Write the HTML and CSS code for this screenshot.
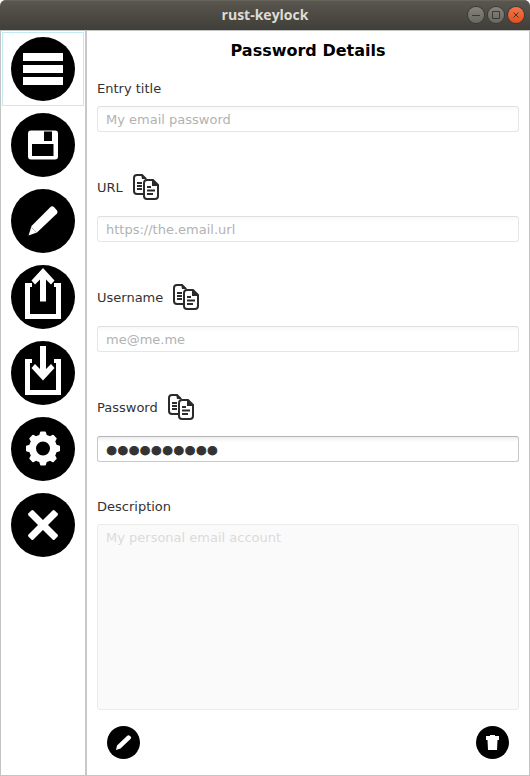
FILE: index.html
```html
<!DOCTYPE html>
<html lang="en">
<head>
<meta charset="utf-8">
<meta name="viewport" content="width=device-width, initial-scale=1">
<title>rust-keylock</title>
<link rel="stylesheet" href="styles.css">
</head>
<body>
<svg class="defs" aria-hidden="true">
  <symbol id="copy" viewBox="0 0 26 26">
    <path d="M10 20H4Q1 20 1 17V4Q1 1 4 1H9L13 5" fill="none" stroke="#2b2b2b" stroke-width="2"/>
    <path d="M8 0L14 5H9Z" fill="#2b2b2b"/>
    <path d="M4 9H9M4 12H9M4 15H9" stroke="#2b2b2b" stroke-width="2"/>
    <path d="M14 6H20L25 11V22Q25 25 22 25H14Q11 25 11 22V9Q11 6 14 6Z" fill="#fff" stroke="#2b2b2b" stroke-width="2"/>
    <path d="M19 5L26 12H19Z" fill="#2b2b2b"/>
    <path d="M14 13H18M14 16.500H22M14 20H20" stroke="#2b2b2b" stroke-width="2"/>
  </symbol>
</svg>
<header class="titlebar">
  <span class="titlebar-text">rust-keylock</span>
  <div class="window-controls">
    <button class="win" aria-label="Minimize"><svg viewBox="0 0 16 16"><path d="M4 8.5H12"/></svg></button>
    <button class="win" aria-label="Maximize"><svg viewBox="0 0 16 16"><path d="M4.500 4.500H11.500V11.500H4.500Z"/></svg></button>
    <button class="win win-close" aria-label="Close window"><svg viewBox="0 0 16 16"><path d="M5.500 5.500L10.500 10.500M10.500 5.500L5.500 10.500"/></svg></button>
  </div>
</header>
<div class="window">
  <nav class="sidebar">
    <button class="side focused" aria-label="Entries"><svg viewBox="0 0 64 64"><circle cx="32" cy="32" r="32"/><path class="w" d="M12 16H52V24H12ZM12 28H52V36H12ZM12 40H52V48H12Z"/></svg></button>
    <button class="side" aria-label="Save"><svg viewBox="0 0 64 64"><circle cx="32" cy="32" r="32"/><path class="w" fill-rule="evenodd" d="M20 17.500H44Q47 17.500 47 20.500V43.500Q47 46.500 44 46.500H20Q17 46.500 17 43.500V20.500Q17 17.500 20 17.500ZM33 18.500V28H41V18.500ZM21 31V43H42.500V31Z"/></svg></button>
    <button class="side" aria-label="Change master password"><svg viewBox="0 0 64 64"><circle cx="32" cy="32" r="32"/><path class="w" d="M39 18.500Q41 16.500 43 18L46 21.500Q47 23 46 24.500L26 43.500L17.500 46.500L20.500 37Z"/><path d="M20.500 38.500L25.500 43.500" fill="none" stroke="#000" stroke-width=".3"/></svg></button>
    <button class="side" aria-label="Export"><svg viewBox="0 0 64 64"><circle cx="32" cy="32" r="32"/><path class="w" d="M14 18H21V22H19V49H45V22H43V18H50V54H14ZM29 36.500V14.500L24 19.500L20.500 15.500L32 3L43.500 15.500L40 19.500L35 14.500V36.500Z"/></svg></button>
    <button class="side" aria-label="Import"><svg viewBox="0 0 64 64"><circle cx="32" cy="32" r="32"/><path class="w" d="M14 18H21V22H19V49H45V22H43V18H50V54H14ZM29 5V28L24 23L20.500 27L32 39.500L43.500 27L40 23L35 28V5Z"/></svg></button>
    <button class="side" aria-label="Settings"><svg viewBox="0 0 64 64"><circle cx="32" cy="32" r="32"/><circle cx="32" cy="31.500" r="10.500" fill="none" stroke="#fff" stroke-width="7"/><g class="w"><path id="t" d="M28 19L29 15.500Q29.200 14.500 30 14.500H34Q34.800 14.500 35 15.500L36 19ZM28 44L29 47.500Q29.200 48.500 30 48.500H34Q34.800 48.500 35 47.500L36 44Z"/><use href="#t" transform="rotate(45 32 31.500)"/><use href="#t" transform="rotate(90 32 31.500)"/><use href="#t" transform="rotate(135 32 31.500)"/></g></svg></button>
    <button class="side" aria-label="Exit"><svg viewBox="0 0 64 64"><circle cx="32" cy="32" r="32"/><g class="w"><rect x="13.500" y="28.500" width="37" height="7" rx="1.500" transform="rotate(45 32 32)"/><rect x="13.500" y="28.500" width="37" height="7" rx="1.500" transform="rotate(-45 32 32)"/></g></svg></button>
  </nav>
  <main class="details">
    <h1>Password Details</h1>
    <form class="form">
      <div class="field">
        <label for="title">Entry title</label>
        <input id="title" type="text" placeholder="My email password">
      </div>
      <div class="field">
        <div class="label-row"><label for="url">URL</label><button type="button" class="copy" aria-label="Copy URL"><svg><use href="#copy"/></svg></button></div>
        <input id="url" type="text" placeholder="https://the.email.url">
      </div>
      <div class="field">
        <div class="label-row"><label for="user">Username</label><button type="button" class="copy" aria-label="Copy username"><svg><use href="#copy"/></svg></button></div>
        <input id="user" type="text" placeholder="me@me.me">
      </div>
      <div class="field">
        <div class="label-row"><label for="pass">Password</label><button type="button" class="copy" aria-label="Copy password"><svg><use href="#copy"/></svg></button></div>
        <input id="pass" class="secret" type="password" value="0123456789">
      </div>
      <div class="field grow">
        <label for="desc">Description</label>
        <textarea id="desc" placeholder="My personal email account"></textarea>
      </div>
      <div class="actions">
        <button type="button" class="round" aria-label="Edit"><svg viewBox="0 0 33 33"><circle cx="16.500" cy="16.500" r="16.500"/><path class="w" d="M20 10Q21.500 8.500 23 10L24 11Q24.500 12 23.500 13L13.500 22.500L9 24L10 19.500Z"/></svg></button>
        <button type="button" class="round" aria-label="Delete"><svg viewBox="0 0 33 33"><circle cx="16.500" cy="16.500" r="16.500"/><path class="w" d="M10 10H14V9H19V10H23V14H21.500L21 24H12L11.500 14H10Z"/></svg></button>
      </div>
    </form>
  </main>
</div>
</body>
</html>
```
FILE: styles.css
```css
* {
  box-sizing: border-box;
}

body {
  margin: 0;
  min-height: 100vh;
  display: flex;
  flex-direction: column;
  background: #fff;
  color: #333;
  font: 13px/18px "DejaVu Sans", sans-serif;
}

.defs {
  display: none;
}

button {
  padding: 0;
  border: 0;
  background: none;
}

svg {
  display: block;
  width: 100%;
  height: 100%;
}

.w {
  fill: #fff;
}

.titlebar {
  display: grid;
  grid-template-columns: 1fr auto 1fr;
  align-items: center;
  height: 30px;
  padding: 0 6px;
  border-radius: 6px 6px 0 0;
  background: linear-gradient(#5a574f, #3f3e38);
  box-shadow: inset 0 1px #66635a;
}

.titlebar-text {
  grid-column: 2;
  color: #dfdbd2;
  font: 700 14px/20px "Open Sans", sans-serif;
}

.window-controls {
  display: flex;
  justify-content: flex-end;
  gap: 4px;
}

.win {
  width: 16px;
  height: 16px;
  border-radius: 50%;
  background: linear-gradient(#85837b, #686760);
  box-shadow: 0 0 0 1px #3a3934;
}

.win path {
  fill: none;
  stroke: #3a3934;
}

.win-close {
  background: linear-gradient(#f4754b, #e2501f);
}

.window {
  flex: 1;
  display: flex;
  border: 1px solid #c4c4c4;
}

.sidebar {
  display: flex;
  flex-direction: column;
  align-items: center;
  gap: 2px;
  padding: 1px;
  border-right: 2px solid #c8c8c8;
}

.side {
  height: 74px;
  padding: 4px 8px;
  border: 1px solid transparent;
}

.side svg {
  width: 64px;
  height: 64px;
}

.focused {
  border-color: #c4eaf5;
}

.details {
  flex: 1;
  display: flex;
  flex-direction: column;
  gap: 20px;
  padding: 10px 10px 16px;
}

h1 {
  margin: 0;
  color: #000;
  font-size: 16px;
  line-height: 19px;
  text-align: center;
}

.form {
  flex: 1;
  display: flex;
  flex-direction: column;
  gap: 36px;
}

.field {
  display: flex;
  flex-direction: column;
  gap: 8px;
}

.label-row {
  display: flex;
  align-items: center;
  gap: 10px;
  height: 40px;
}

.copy {
  width: 26px;
  height: 26px;
  margin-bottom: 2px;
}

input,
textarea {
  width: 100%;
  height: 26px;
  padding: 0 8px;
  border: 1px solid #e6e6e6;
  border-top-color: #e0e0e0;
  border-radius: 3px;
  background: linear-gradient(#f8f8f8, #fff 5px);
  color: #333;
  font: inherit;
}

::placeholder {
  color: #b2b2b2;
}

.secret {
  padding-top: 2px;
  border-color: #c8c8c8;
  border-top-color: #b4b4b4;
  background: linear-gradient(#eee, #fff 5px);
  font: 32px/24px "Liberation Sans", sans-serif;
  -webkit-text-stroke: 1px #333;
}

.grow {
  flex: 1;
}

textarea {
  flex: 1;
  padding: 4px 8px;
  border-color: #ebebeb;
  background: #fafafa;
  resize: none;
}

textarea::placeholder {
  color: #dadada;
}

.actions {
  display: flex;
  justify-content: space-between;
  margin-top: -20px;
  padding: 0 10px;
}

.round {
  width: 33px;
  height: 33px;
}
```
